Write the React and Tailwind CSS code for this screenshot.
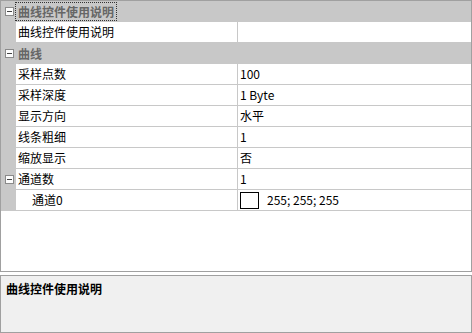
const rows = [
  { type: 'cat', label: '曲线控件使用说明', focus: true },
  { type: 'prop', label: '曲线控件使用说明', value: '' },
  { type: 'cat', label: '曲线' },
  { type: 'prop', label: '采样点数', value: '100' },
  { type: 'prop', label: '采样深度', value: '1 Byte' },
  { type: 'prop', label: '显示方向', value: '水平' },
  { type: 'prop', label: '线条粗细', value: '1' },
  { type: 'prop', label: '缩放显示', value: '否' },
  { type: 'prop', label: '通道数', value: '1', expander: true },
  { type: 'prop', label: '通道0', value: '255; 255; 255', indent: true, color: true },
];

function Expander() {
  return (
    <svg width="9" height="9" viewBox="0 0 9 9" className="block">
      <rect x="0.5" y="0.5" width="8" height="8" fill="#fdfdfd" stroke="#8a8a8a" />
      <line x1="2" y1="4.5" x2="7" y2="4.5" stroke="#444" />
    </svg>
  );
}

function CategoryRow({ row }) {
  return (
    <div className="flex h-[21px] items-center bg-[#c8c8c8]">
      <div className="flex w-[15px] shrink-0 items-center justify-center pl-[1px]">
        <Expander />
      </div>
      <span
        className={
          'px-[2px] text-[12px] leading-[17px] font-bold text-[#666666] ' +
          (row.focus ? 'outline outline-1 outline-dotted outline-[#333]' : '')
        }
      >
        {row.label}
      </span>
    </div>
  );
}

function PropRow({ row }) {
  return (
    <div className="flex h-[21px]">
      <div className="flex w-[15px] shrink-0 items-center justify-center bg-[#c8c8c8] pl-[1px]">
        {row.expander && <Expander />}
      </div>
      <div
        className={
          'flex w-[222px] shrink-0 items-center border-r border-b border-[#c8c8c8] text-[12px] text-black ' +
          (row.indent ? 'pl-[16px]' : 'pl-[2px]')
        }
      >
        {row.label}
      </div>
      <div className="flex flex-1 items-center gap-[8px] border-b border-[#c8c8c8] pl-[2px] text-[12px] text-black">
        {row.color && <div className="h-[17px] w-[19px] border border-black bg-white" />}
        <span>{row.value}</span>
      </div>
    </div>
  );
}

export default function App() {
  return (
    <div
      className="flex h-[333px] w-[472px] flex-col bg-white"
      style={{ fontFamily: '"Noto Sans CJK SC", "Noto Sans", sans-serif' }}
    >
      <div className="h-[272px] shrink-0 border border-[#a0a0a0] bg-white">
        {rows.map((row, i) =>
          row.type === 'cat' ? <CategoryRow key={i} row={row} /> : <PropRow key={i} row={row} />
        )}
      </div>
      <div className="mt-[3px] flex-1 border border-[#a0a0a0] bg-[#f0f0f0] px-[5px] pt-[5px]">
        <div className="text-[12px] leading-[16px] font-bold text-black">曲线控件使用说明</div>
      </div>
    </div>
  );
}
